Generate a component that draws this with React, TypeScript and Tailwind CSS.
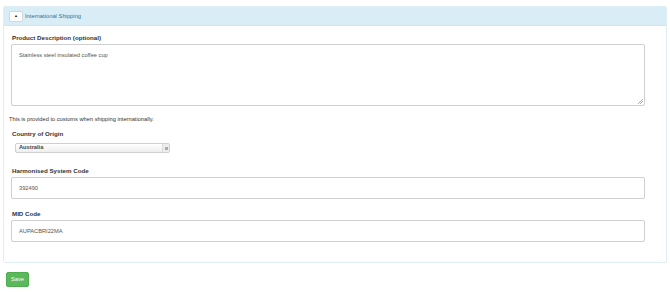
import React from "react"

const labelCls = "block pl-[1px] text-[6.2px] font-bold leading-[8px] text-[#333]"

export default function App() {
  return (
    <div className="min-h-[292px] w-[670px] bg-white pt-[6px] font-['Liberation_Sans',Arial,sans-serif]">
      <div className="ml-[3px] w-[664px] rounded-[2px] border border-[#dfeef4]">
        {/* header */}
        <div className="flex h-[19px] items-center gap-[2px] border-b border-[#cfe6f0] bg-[#d9edf7] pl-[5px]">
          <button className="flex h-[11px] w-[14px] items-center justify-center rounded-[2px] border border-[#d6d6d6] bg-white text-[4px] leading-none text-[#222]">
            ▲
          </button>
          <span className="text-[5.8px] leading-[8px] text-[#31708f]">International Shipping</span>
        </div>

        {/* body */}
        <div className="pb-[20px] pt-[8px]">
          <div className="pl-[7px]">
            <label className={labelCls}>Product Description (optional)</label>
            <div className="relative mt-[2px] h-[62px] w-[634px] rounded-[2px] border border-[#cfcfcf] bg-white px-[7px] pt-[6px] text-[5.7px] leading-[8px] text-[#555]">
              Stainless steel insulated coffee cup
              <svg className="absolute bottom-[1px] right-[1px]" width="5" height="5" viewBox="0 0 5 5">
                <path d="M5 0 L0 5 M5 2 L2 5" stroke="#999" strokeWidth="0.8" />
              </svg>
            </div>
          </div>

          <p className="mt-[9px] pl-[5px] text-[5.7px] leading-[8px] text-[#333]">
            This is provided to customs when shipping internationally.
          </p>

          <div className="mt-[7px] pl-[7px]">
            <label className={labelCls}>Country of Origin</label>
            <div className="ml-[4px] mt-[5px] flex h-[10px] w-[155px] items-center rounded-[2px] border border-[#d0d0d0] bg-gradient-to-b from-white to-[#eeeeee]">
              <span className="flex-1 pl-[3px] text-[5.7px] font-bold leading-none text-[#444]">Australia</span>
              <span className="flex h-full w-[7px] items-center justify-center border-l border-[#dcdcdc] bg-[#ececec]">
                <span className="h-[3px] w-[3px] bg-[#aaa]" />
              </span>
            </div>
          </div>

          <div className="mt-[14px] pl-[7px]">
            <label className={labelCls}>Harmonised System Code</label>
            <div className="mt-[2px] flex h-[22px] w-[634px] items-center rounded-[2px] border border-[#cfcfcf] bg-white px-[7px] text-[5.7px] text-[#555]">
              392490
            </div>
          </div>

          <div className="mt-[11px] pl-[7px]">
            <label className={labelCls}>MID Code</label>
            <div className="mt-[2px] flex h-[22px] w-[634px] items-center rounded-[2px] border border-[#cfcfcf] bg-white px-[7px] text-[5.7px] text-[#555]">
              AUPACBRI22MA
            </div>
          </div>
        </div>
      </div>

      <button className="ml-[6px] mt-[9px] flex h-[15px] w-[23px] items-center justify-center rounded-[2px] border border-[#4cae4c] bg-[#5cb85c] text-[5.7px] text-white">
        Save
      </button>
    </div>
  )
}
